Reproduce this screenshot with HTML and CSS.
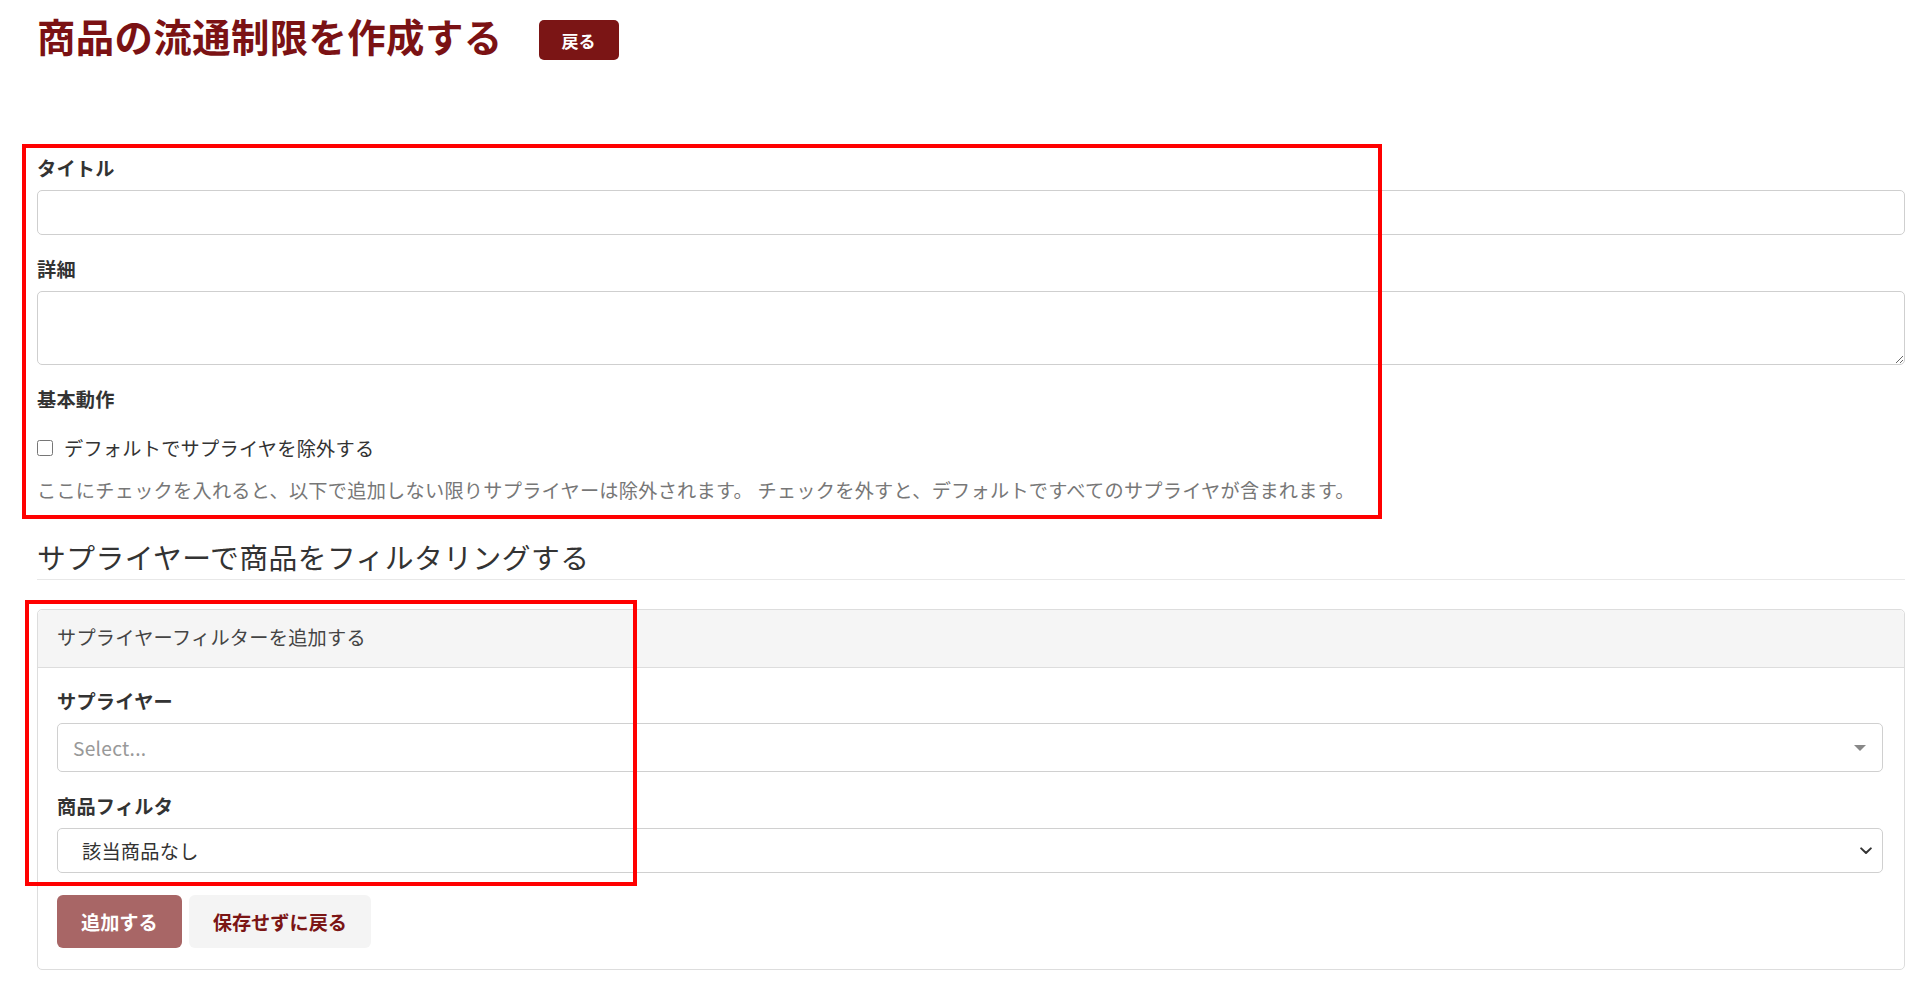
FILE: index.html
```html
<!DOCTYPE html>
<html lang="ja">
<head>
<meta charset="utf-8">
<title>商品の流通制限を作成する</title>
<link rel="stylesheet" href="styles.css">
</head>
<body>
<div class="page">
  <div class="page-head">
    <h1 class="page-title">商品の流通制限を作成する</h1>
    <a class="btn btn-back">戻る</a>
  </div>

  <form class="form">
    <div class="group">
      <label class="label" for="title">タイトル</label>
      <input class="control" id="title" type="text">
    </div>
    <div class="group">
      <label class="label" for="detail">詳細</label>
      <textarea class="control textarea" id="detail"></textarea>
    </div>
    <div class="group group-last">
      <div class="label">基本動作</div>
      <label class="check-row"><input class="check" type="checkbox"><span>デフォルトでサプライヤを除外する</span></label>
      <p class="help">ここにチェックを入れると、以下で追加しない限りサプライヤーは除外されます。 チェックを外すと、デフォルトですべてのサプライヤが含まれます。</p>
    </div>

    <h3 class="section-title">サプライヤーで商品をフィルタリングする</h3>

    <div class="panel">
      <div class="panel-heading">サプライヤーフィルターを追加する</div>
      <div class="panel-body">
        <div class="group">
          <div class="label">サプライヤー</div>
          <div class="select2">
            <span class="placeholder">Select...</span>
            <span class="tri"></span>
          </div>
        </div>
        <div class="group">
          <div class="label">商品フィルタ</div>
          <div class="select-native">
            <span>該当商品なし</span>
            <svg class="chev" width="12" height="8" viewBox="0 0 12 8"><path d="M1.2 1.4 L6 6 L10.8 1.4" fill="none" stroke="#333" stroke-width="2" stroke-linecap="round" stroke-linejoin="round"/></svg>
          </div>
        </div>
        <div class="actions">
          <a class="btn btn-add">追加する</a>
          <a class="btn btn-cancel">保存せずに戻る</a>
        </div>
      </div>
    </div>
  </form>
</div>

<div class="mark mark-1"></div>
<div class="mark mark-2"></div>
</body>
</html>
```

FILE: styles.css
```css
* { box-sizing: border-box; }

html, body {
  margin: 0;
  padding: 0;
  background: #fff;
}

body {
  font-family: "Noto Sans CJK JP", "Noto Sans", sans-serif;
  font-size: 19.2px;
  letter-spacing: 0.25px;
  color: #333;
  position: relative;
  min-height: 983px;
}

.page {
  padding: 12px 15px 0 37px;
}

.page-head {
  display: flex;
  align-items: flex-start;
  gap: 36px;
}

.page-title {
  margin: 0;
  font-size: 38.4px;
  line-height: 46px;
  font-weight: 700;
  letter-spacing: 0.4px;
  color: #7b1214;
}

.btn {
  display: inline-flex;
  align-items: center;
  justify-content: center;
  border-radius: 6px;
  font-weight: 700;
  letter-spacing: 0;
  text-decoration: none;
  cursor: pointer;
}

.btn-back {
  margin-top: 8px;
  height: 40px;
  padding: 0 23px;
  background: #7b1515;
  color: #fff;
  font-size: 17px;
  border-radius: 5px;
}

.form {
  padding-top: 94.5px;
}

.group {
  margin-bottom: 20.5px;
}

.group-last {
  margin-bottom: 0;
}

.label {
  display: block;
  font-weight: 700;
  font-size: 19.2px;
  line-height: 27px;
  margin-bottom: 8.5px;
  color: #333;
}

.control {
  display: block;
  width: 100%;
  height: 45px;
  border: 1px solid #cfcfcf;
  border-radius: 5px;
  font-family: inherit;
  font-size: 19.2px;
  padding: 6px 14px;
  background: #fff;
  margin: 0;
}

.textarea {
  height: 74px;
  resize: vertical;
}

.check-row {
  display: flex;
  align-items: center;
  gap: 11px;
  margin-top: 22px;
  line-height: 27px;
  color: #333;
}

.check {
  width: 16px;
  height: 16px;
  margin: 0;
  accent-color: #7b1515;
}

.help {
  margin: 15px 0 0;
  line-height: 27px;
  color: #777;
}

.section-title {
  margin: 37.5px 0 0;
  font-size: 28.8px;
  line-height: 32px;
  font-weight: 400;
  letter-spacing: 0.45px;
  color: #333;
  padding-bottom: 6px;
  border-bottom: 1px solid #e8e8e8;
}

.panel {
  margin-top: 29px;
  border: 1px solid #ddd;
  border-radius: 5px;
  background: #fff;
}

.panel-heading {
  background: #f5f5f5;
  border-bottom: 1px solid #ddd;
  border-radius: 5px 5px 0 0;
  padding: 11px 19px 14px;
  line-height: 32px;
  color: #444;
}

.panel-body {
  padding: 19.5px 21px 21px 19px;
}

.select2 {
  display: flex;
  align-items: center;
  justify-content: space-between;
  height: 49px;
  border: 1px solid #d0d0d0;
  border-radius: 5px;
  padding: 0 16px 0 15px;
}

.placeholder {
  color: #999;
}

.tri {
  width: 0;
  height: 0;
  border-left: 6px solid transparent;
  border-right: 6px solid transparent;
  border-top: 6px solid #888;
}

.select-native {
  display: flex;
  align-items: center;
  justify-content: space-between;
  height: 45px;
  border: 1px solid #d0d0d0;
  border-radius: 5px;
  padding: 0 10px 0 24px;
  color: #333;
}

.chev {
  display: block;
}

.actions {
  display: flex;
  gap: 7px;
  margin-top: 22px;
}

.btn-add {
  height: 53px;
  padding: 0 24px;
  background: #a86666;
  color: #fff;
  font-size: 19.2px;
}

.btn-cancel {
  height: 53px;
  padding: 0 24px;
  background: #f4f4f4;
  color: #7b1515;
  font-size: 19.2px;
}

.mark {
  position: absolute;
  border: 4px solid #ff0000;
  pointer-events: none;
}

.mark-1 {
  left: 22px;
  top: 144px;
  width: 1360px;
  height: 375px;
}

.mark-2 {
  left: 25px;
  top: 600px;
  width: 612px;
  height: 286px;
}
```
